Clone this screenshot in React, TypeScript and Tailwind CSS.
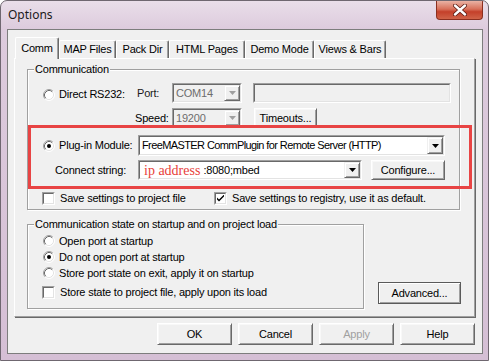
import React from "react";

const font = "font-['Liberation_Sans',Arial,sans-serif]";

function Arrow({ disabled }: { disabled?: boolean }) {
  return (
    <svg width="7" height="4" viewBox="0 0 7 4">
      <path d="M0 0h7L3.5 4z" fill={disabled ? "#a0a0a0" : "#000"} />
    </svg>
  );
}

function DropBtn({ disabled }: { disabled?: boolean }) {
  return (
    <div className="flex w-[16px] items-center justify-center border border-t-[#f0f0f0] border-l-[#f0f0f0] border-r-[#696969] border-b-[#696969] bg-[#f0f0f0] shadow-[inset_1px_1px_0_#fff,inset_-1px_-1px_0_#a0a0a0]">
      <Arrow disabled={disabled} />
    </div>
  );
}

function Combo({
  className,
  children,
  disabled,
  noButton,
}: {
  className: string;
  children?: React.ReactNode;
  disabled?: boolean;
  noButton?: boolean;
}) {
  return (
    <div
      className={`flex border border-t-[#a0a0a0] border-l-[#a0a0a0] border-r-white border-b-white ${className}`}
    >
      <div
        className={`flex flex-1 border border-t-[#696969] border-l-[#696969] border-r-[#e3e3e3] border-b-[#e3e3e3] ${
          disabled ? "bg-[#f0f0f0] text-[#6d6d6d]" : "bg-white text-black"
        }`}
      >
        <div className="flex flex-1 items-center overflow-hidden whitespace-nowrap pl-[2px]">{children}</div>
        {!noButton && <DropBtn disabled={disabled} />}
      </div>
    </div>
  );
}

function Btn({
  className,
  children,
  disabled,
  dark,
}: {
  className: string;
  children: React.ReactNode;
  disabled?: boolean;
  dark?: boolean;
}) {
  return (
    <div
      className={`flex items-center justify-center bg-[#f0f0f0] border ${
        dark
          ? "border-[#5a5a5a] shadow-[inset_1px_1px_0_#fff,inset_-1px_-1px_0_#a0a0a0]"
          : "border-t-white border-l-white border-r-[#696969] border-b-[#696969] shadow-[inset_1px_1px_0_#f8f8f8,inset_-1px_-1px_0_#a0a0a0]"
      } ${disabled ? "text-[#a0a0a0]" : "text-black"} ${className}`}
    >
      {children}
    </div>
  );
}

function Radio({ checked }: { checked?: boolean }) {
  return (
    <svg width="12" height="12" viewBox="0 0 12 12" className="shrink-0">
      <circle cx="6" cy="6" r="5" fill="#fff" />
      <path d="M2.11 9.89A5.5 5.5 0 0 1 9.89 2.11" fill="none" stroke="#a0a0a0" />
      <path d="M9.89 2.11A5.5 5.5 0 0 1 2.11 9.89" fill="none" stroke="#fff" />
      <path d="M2.82 9.18A4.5 4.5 0 0 1 9.18 2.82" fill="none" stroke="#696969" />
      <path d="M9.18 2.82A4.5 4.5 0 0 1 2.82 9.18" fill="none" stroke="#e3e3e3" />
      {checked && <circle cx="6" cy="6" r="2" fill="#000" />}
    </svg>
  );
}

function Check({ checked }: { checked?: boolean }) {
  return (
    <div className="flex h-[13px] w-[13px] shrink-0 border border-t-[#a0a0a0] border-l-[#a0a0a0] border-r-white border-b-white">
      <div className="flex flex-1 items-center justify-center border border-t-[#696969] border-l-[#696969] border-r-[#e3e3e3] border-b-[#e3e3e3] bg-white">
        {checked && (
          <svg width="7" height="7" viewBox="0 0 7 7">
            <path d="M0 2.5l2 2 5-5v2l-5 5-2-2z" fill="#000" />
          </svg>
        )}
      </div>
    </div>
  );
}

function Group({
  label,
  className,
  children,
}: {
  label: string;
  className: string;
  children: React.ReactNode;
}) {
  return (
    <div
      className={`relative border border-[#a0a0a0] shadow-[inset_1px_1px_0_#fff,1px_1px_0_#fff] ${className}`}
    >
      <span className="absolute -top-[8px] left-[6px] bg-[#f0f0f0] px-[1px] leading-[14px]">{label}</span>
      {children}
    </div>
  );
}

const tabs = [
  { name: "MAP Files", w: "w-[57px]" },
  { name: "Pack Dir", w: "w-[53px]" },
  { name: "HTML Pages", w: "w-[76px]" },
  { name: "Demo Mode", w: "w-[69px]" },
  { name: "Views & Bars", w: "w-[72px]" },
];

export default function App() {
  return (
    <div
      className={`relative h-[361px] w-[489px] overflow-hidden rounded-t-[7px] border border-[#6f6770] bg-[linear-gradient(180deg,#e9dee9_0px,#ddcbdd_28px,#d5bfd5_100%)] text-[11px] tracking-[-0.2px] text-black ${font}`}
    >
      {/* title bar */}
      <div className="flex h-[28px] items-center pl-[7px] font-['Noto_Sans',sans-serif] text-[12px] tracking-normal text-[#1a1a1a]">
        Options
      </div>
      <div className="absolute right-[5px] top-0 flex h-[19px] w-[47px] items-center justify-center rounded-b-[4px] border border-t-0 border-[#8b2f1f] bg-[linear-gradient(180deg,#eab2a4_0%,#d8705a_45%,#c4402a_60%,#d06348_100%)]">
        <svg width="14" height="12" viewBox="0 0 14 12">
          <path d="M2 1.5l10 9M12 1.5l-10 9" stroke="#5a1a12" strokeWidth="4" strokeLinecap="round" />
          <path d="M2 1.5l10 9M12 1.5l-10 9" stroke="#fff" strokeWidth="2.4" strokeLinecap="round" />
        </svg>
      </div>

      {/* client area */}
      <div className="ml-[6px] flex h-[325px] w-[476px] flex-col border border-[#7d7d7d] bg-[#f0f0f0]">
        {/* tabs */}
        <div className="flex h-[28px] items-end pl-[7px]">
          <div className="relative z-10 -mb-[1px] flex h-[22px] w-[44px] items-center justify-center rounded-t-[2px] border-l border-t border-white border-r border-r-[#696969] bg-[#f0f0f0] pb-[1px] shadow-[inset_-1px_0_0_#a0a0a0]">
            Comm
          </div>
          {tabs.map((t) => (
            <div
              key={t.name}
              className={`flex h-[18px] items-center justify-center rounded-t-[2px] border-l border-t border-white border-r border-r-[#696969] shadow-[inset_-1px_0_0_#a0a0a0] ${t.w}`}
            >
              {t.name}
            </div>
          ))}
        </div>

        {/* tab page */}
        <div className="ml-[6px] flex h-[259px] w-[461px] flex-col border border-t-white border-l-white border-r-[#a0a0a0] border-b-[#a0a0a0] shadow-[1px_1px_0_#696969]">
          <Group label="Communication" className="ml-[12px] mt-[10px] h-[141px] w-[433px]">
            <div className="flex h-[20px] mt-[13px] items-center">
              <div className="flex items-center pl-[15px] pt-[3px]">
                <Radio />
                <span className="ml-[4px] w-[78px]">Direct RS232:</span>
              </div>
              <span className="w-[35px] text-[#1a1a1a]">Port:</span>
              <Combo disabled className="h-[20px] w-[70px]">
                COM14
              </Combo>
              <Combo disabled noButton className="ml-[11px] h-[20px] w-[198px]" />
            </div>
            <div className="mt-[5px] flex h-[20px] items-center">
              <span className="ml-[107px] w-[37px]">Speed:</span>
              <Combo disabled className="h-[20px] w-[70px]">
                19200
              </Combo>
              <Btn className="ml-[12px] h-[20px] w-[63px]">Timeouts...</Btn>
            </div>
            <div className="mt-[7px] flex h-[21px] items-center">
              <div className="flex items-center pl-[15px]">
                <Radio checked />
                <span className="ml-[4px] w-[79px]">Plug-in Module:</span>
              </div>
              <Combo className="h-[21px] w-[307px]">
                <span className="tracking-[-0.6px]">FreeMASTER CommPlugin for Remote Server (HTTP)</span>
              </Combo>
            </div>
            <div className="mt-[4px] flex h-[20px] items-center">
              <span className="ml-[27px] w-[83px]">Connect string:</span>
              <Combo className="h-[20px] w-[224px]">
                <span className="ml-[2px] mr-[3px] font-['Liberation_Serif',serif] text-[14px] leading-[15px] tracking-normal text-[#e8413a]">
                  ip address
                </span>
                <span>:8080;mbed</span>
              </Combo>
              <Btn className="ml-[9px] h-[20px] w-[74px]">Configure...</Btn>
            </div>
            <div className="mt-[12px] flex h-[13px] items-center">
              <div className="ml-[14px]">
                <Check />
              </div>
              <span className="ml-[5px] w-[154px]">Save settings to project file</span>
              <Check checked />
              <span className="ml-[5px]">Save settings to registry, use it as default.</span>
            </div>
            <div className="pointer-events-none absolute left-0 top-[55px] h-[64px] w-[444px] border-[3px] border-[#e84444]" />
          </Group>

          <div className="ml-[12px] mt-[14px] flex items-end">
            <Group label="Communication state on startup and on project load" className="h-[85px] w-[337px]">
              <div className="flex flex-col pt-[8px]">
                {[
                  { t: "Open port at startup", c: false },
                  { t: "Do not open port at startup", c: true },
                  { t: "Store port state on exit, apply it on startup", c: false },
                ].map((r) => (
                  <div key={r.t} className="flex h-[16px] items-center pl-[15px]">
                    <Radio checked={r.c} />
                    <span className="ml-[4px]">{r.t}</span>
                  </div>
                ))}
                <div className="ml-[14px] mt-[5px] flex h-[13px] items-center">
                  <Check />
                  <span className="ml-[5px]">Store state to project file, apply upon its load</span>
                </div>
              </div>
            </Group>
            <Btn dark className="mb-[5px] ml-[14px] h-[22px] w-[83px]">
              Advanced...
            </Btn>
          </div>
        </div>

        {/* dialog buttons */}
        <div className="ml-[149px] mt-[6px] flex h-[22px] gap-[6px]">
          <Btn className="h-[22px] w-[75px]">OK</Btn>
          <Btn className="h-[22px] w-[75px]">Cancel</Btn>
          <Btn disabled className="h-[22px] w-[75px]">
            Apply
          </Btn>
          <Btn className="h-[22px] w-[75px]">Help</Btn>
        </div>
      </div>
    </div>
  );
}
